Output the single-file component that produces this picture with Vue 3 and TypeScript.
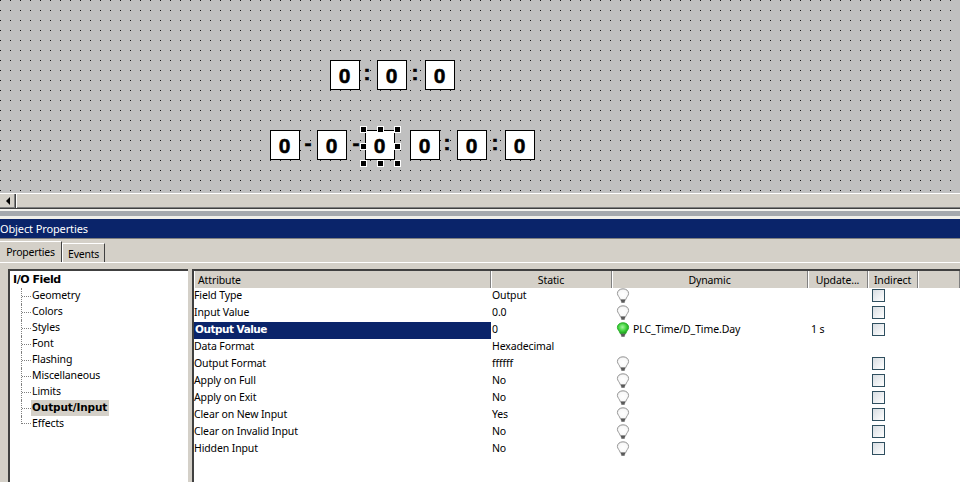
<template>
  <div class="app">
    <div class="canvas">
      <template v-for="item in canvasItems" :key="item.x + '-' + item.y">
        <div v-if="item.kind === 'field'" class="io-field" :style="{ left: item.x + 'px', top: item.y + 'px' }">
          0
          <template v-if="item.selected">
            <i v-for="h in handles" :key="h.x + '-' + h.y" class="handle" :style="{ left: h.x + 'px', top: h.y + 'px' }"></i>
          </template>
        </div>
        <div v-else class="sep" :style="{ left: item.x + 'px', top: item.y + 'px' }">{{ item.text }}</div>
      </template>
    </div>

    <div class="hscroll">
      <div class="arrow-btn"><span class="arrow"></span></div>
      <div class="track"></div>
    </div>
    <div class="splitter"></div>

    <div class="titlebar">Object Properties</div>

    <div class="tabs">
      <div class="tab active">Properties</div>
      <div class="tab">Events</div>
    </div>

    <div class="panel">
      <div class="tree">
        <div class="tree-root">I/O Field</div>
        <div class="tree-list">
          <div v-for="n in treeNodes" :key="n" class="tree-node">
            <span class="dots"></span>
            <span class="tree-label" :class="{ current: n === 'Output/Input' }">{{ n }}</span>
          </div>
        </div>
      </div>

      <div class="table">
        <div class="thead">
          <div class="th c-attr left">Attribute</div>
          <div class="th c-static">Static</div>
          <div class="th c-dyn">Dynamic</div>
          <div class="th c-upd">Update...</div>
          <div class="th c-ind">Indirect</div>
          <div class="th c-rest"></div>
        </div>
        <div v-for="r in rows" :key="r.name" class="row">
          <div class="td c-attr name" :class="{ sel: r.sel }">{{ r.name }}</div>
          <div class="td c-static val">{{ r.value }}</div>
          <div class="td c-dyn dyn">
            <svg v-if="r.bulb" class="bulb" width="14" height="16" viewBox="0 0 14 16">
              <defs>
                <radialGradient id="on" cx="0.45" cy="0.4" r="0.6">
                  <stop offset="0" stop-color="#a6f5a0" />
                  <stop offset="0.6" stop-color="#3ed23a" />
                  <stop offset="1" stop-color="#1c9a1c" />
                </radialGradient>
                <radialGradient id="off" cx="0.5" cy="0.55" r="0.6">
                  <stop offset="0" stop-color="#ffffff" />
                  <stop offset="0.7" stop-color="#f8f8f8" />
                  <stop offset="1" stop-color="#d8d8d8" />
                </radialGradient>
              </defs>
              <path
                d="M7 .8C3.700.8 1.400 2.800 1.400 5.400c0 2.300 2.200 3.600 2.900 6.300h5.400c.7-2.700 2.900-4 2.900-6.300C12.600 2.800 10.300.8 7 .8z"
                :fill="r.tag ? 'url(#on)' : 'url(#off)'"
                :stroke="r.tag ? '#2fae2f' : '#9a9a9a'"
              />
              <path d="M4.800 12.500h4.400M5.300 14h3.400" stroke="#5a5a5a" stroke-width="1.300" />
            </svg>
            <span v-if="r.tag" class="tag">{{ r.tag }}</span>
          </div>
          <div class="td c-upd upd">{{ r.update }}</div>
          <div class="td c-ind ind"><span v-if="r.bulb" class="check"></span></div>
        </div>
      </div>
    </div>
  </div>
</template>

<script setup lang="ts">
type CanvasItem =
  | { kind: "field"; x: number; y: number; selected?: boolean }
  | { kind: "sep"; x: number; y: number; text: string };

const canvasItems: CanvasItem[] = [
  { kind: "field", x: 330, y: 60 },
  { kind: "sep", x: 361, y: 58, text: ":" },
  { kind: "field", x: 377, y: 60 },
  { kind: "sep", x: 409, y: 58, text: ":" },
  { kind: "field", x: 425, y: 60 },
  { kind: "field", x: 270, y: 130 },
  { kind: "sep", x: 302, y: 128, text: "-" },
  { kind: "field", x: 317, y: 130 },
  { kind: "sep", x: 350, y: 128, text: "-" },
  { kind: "field", x: 365, y: 130, selected: true },
  { kind: "field", x: 410, y: 130 },
  { kind: "sep", x: 441, y: 128, text: ":" },
  { kind: "field", x: 457, y: 130 },
  { kind: "sep", x: 489, y: 128, text: ":" },
  { kind: "field", x: 505, y: 130 },
];

const handles = [
  { x: -6, y: -5 },
  { x: 11, y: -5 },
  { x: 28, y: -5 },
  { x: -6, y: 12 },
  { x: 28, y: 12 },
  { x: -6, y: 29 },
  { x: 11, y: 29 },
  { x: 28, y: 29 },
];

const treeNodes = [
  "Geometry",
  "Colors",
  "Styles",
  "Font",
  "Flashing",
  "Miscellaneous",
  "Limits",
  "Output/Input",
  "Effects",
];

const rows = [
  { name: "Field Type", value: "Output", bulb: true },
  { name: "Input Value", value: "0.0", bulb: true },
  { name: "Output Value", value: "0", bulb: true, sel: true, tag: "PLC_Time/D_Time.Day", update: "1 s" },
  { name: "Data Format", value: "Hexadecimal", bulb: false },
  { name: "Output Format", value: "ffffff", bulb: true },
  { name: "Apply on Full", value: "No", bulb: true },
  { name: "Apply on Exit", value: "No", bulb: true },
  { name: "Clear on New Input", value: "Yes", bulb: true },
  { name: "Clear on Invalid Input", value: "No", bulb: true },
  { name: "Hidden Input", value: "No", bulb: true },
];
</script>

<style>
html,
body {
  margin: 0;
  background: #d4d0c8;
}
</style>

<style scoped>
.app {
  width: 960px;
  height: 482px;
  overflow: hidden;
  display: flex;
  flex-direction: column;
  background: #d4d0c8;
  font-family: "Noto Sans", "DejaVu Sans", sans-serif;
  font-size: 10.5px;
  letter-spacing: -0.12px;
  color: #000;
}

.canvas {
  position: relative;
  height: 193px;
  flex: none;
  background-color: #c0c0c0;
  background-image: linear-gradient(to right, transparent 1px, #c0c0c0 1px), linear-gradient(to bottom, #111 1px, #c0c0c0 1px);
  background-size: 10px 10px;
}

.io-field {
  position: absolute;
  box-sizing: border-box;
  width: 30px;
  height: 30px;
  padding-right: 1px;
  background: #fff;
  border: 1px solid #000;
  display: flex;
  align-items: center;
  justify-content: center;
  font-family: "Liberation Sans", sans-serif;
  font-weight: 700;
  font-size: 21px;
  -webkit-text-stroke: 0.5px #000;
  letter-spacing: 0;
  line-height: 1;
}

.sep {
  position: absolute;
  width: 12px;
  height: 30px;
  display: flex;
  align-items: center;
  justify-content: center;
  font-family: "Liberation Sans", sans-serif;
  font-weight: 700;
  font-size: 21px;
  -webkit-text-stroke: 0.6px #000;
  letter-spacing: 0;
}

.handle {
  position: absolute;
  width: 5px;
  height: 5px;
  background: #000;
  border: 1px solid #fff;
}

.hscroll {
  height: 16px;
  flex: none;
  display: flex;
  box-sizing: border-box;
  border-top: 1px solid #fff;
  border-bottom: 1px solid #404040;
  background: #d4d0c8;
}

.arrow-btn {
  width: 16px;
  box-sizing: border-box;
  background: #d4d0c8;
  border-right: 1px solid #404040;
  box-shadow: inset -1px -1px 0 #808080;
  display: flex;
  align-items: center;
  justify-content: center;
}

.arrow {
  width: 0;
  height: 0;
  border: 4px solid transparent;
  border-left: 0;
  border-right-color: #000;
}

.track {
  flex: 1;
  border-left: 1px solid #fff;
  box-shadow: inset 0 -1px 0 #808080;
}

.splitter {
  height: 10px;
  flex: none;
  box-sizing: border-box;
  border-top: 2px solid #f4f3ef;
  border-bottom: 3px solid #f0efea;
  background: #a4a8ae;
}

.titlebar {
  height: 19px;
  flex: none;
  background: #0a246a;
  color: #fff;
  line-height: 19px;
  font-size: 11px;
  white-space: nowrap;
}

.tabs {
  display: flex;
  align-items: flex-end;
  height: 25px;
  flex: none;
  box-sizing: border-box;
  border-top: 1px solid #808080;
  border-bottom: 1px solid #fff;
}

.tab {
  box-sizing: border-box;
  height: 19px;
  width: 43px;
  text-align: center;
  line-height: 21px;
  letter-spacing: -0.25px;
  border-top: 1px solid #fff;
  border-left: 1px solid #fff;
  border-right: 1px solid #404040;
}

.tab.active {
  height: 21px;
  width: 62px;
  line-height: 21px;
  border-left: 0;
}

.panel {
  flex: 1;
  display: flex;
  gap: 4px;
  padding: 6px 0 0 8px;
  min-height: 0;
}

.tree {
  width: 180px;
  flex: none;
  box-sizing: border-box;
  background: #fff;
  border-top: 2px solid #404040;
  border-left: 2px solid #404040;
  padding: 1px 0 0 3px;
}

.tree-root {
  font-family: "DejaVu Sans", sans-serif;
  font-weight: 700;
  font-size: 11px;
  letter-spacing: -0.45px;
  height: 16px;
  line-height: 16px;
}

.tree-list {
  padding-left: 8px;
}

.tree-node {
  height: 16px;
  display: flex;
  align-items: center;
  border-left: 1px dotted #808080;
}

.tree-node:last-child {
  height: 8px;
  margin-bottom: 8px;
  align-items: flex-end;
}

.dots {
  width: 9px;
  border-top: 1px dotted #808080;
}

.tree-label {
  padding: 0 1px;
  height: 16px;
  line-height: 15px;
}

.tree-node:last-child .tree-label {
  margin-bottom: -8px;
}

.tree-label.current {
  background: #d4d0c8;
  font-family: "DejaVu Sans", sans-serif;
  font-weight: 700;
  padding-right: 2px;
}

.table {
  flex: 1;
  background: #fff;
  border-top: 2px solid #404040;
  border-left: 2px solid #404040;
  min-width: 0;
}

.thead {
  display: flex;
  height: 17px;
  background: #d4d0c8;
}

.th {
  box-sizing: border-box;
  height: 17px;
  line-height: 18px;
  text-align: center;
  border-right: 1px solid #808080;
  box-shadow: inset 1px 0 0 #fff;
}

.th.left {
  text-align: left;
  padding-left: 4px;
}

.c-attr {
  width: 297px;
}

.c-static {
  width: 121px;
}

.c-dyn {
  width: 196px;
}

.c-upd {
  width: 60px;
}

.c-ind {
  width: 50px;
}

.c-rest {
  flex: 1;
}

.row {
  display: flex;
  height: 17px;
}

.td {
  box-sizing: border-box;
  height: 17px;
  line-height: 15px;
  white-space: nowrap;
}

.name {
  padding-left: 0;
}

.name.sel {
  padding-left: 1px;
  background: #0a246a;
  color: #fff;
  font-family: "DejaVu Sans", sans-serif;
  font-weight: 700;
  letter-spacing: -0.5px;
}

.val {
  padding-left: 1px;
}

.dyn {
  display: flex;
  align-items: center;
  padding: 0 0 2px 4px;
  gap: 3px;
}

.upd {
  padding-left: 3px;
}

.ind {
  display: flex;
  align-items: center;
  padding: 0 0 2px 4px;
}

.check {
  box-sizing: border-box;
  width: 13px;
  height: 13px;
  border: 1px solid #2f4f5f;
  background: linear-gradient(135deg, #d8dde2, #fff);
}
</style>
